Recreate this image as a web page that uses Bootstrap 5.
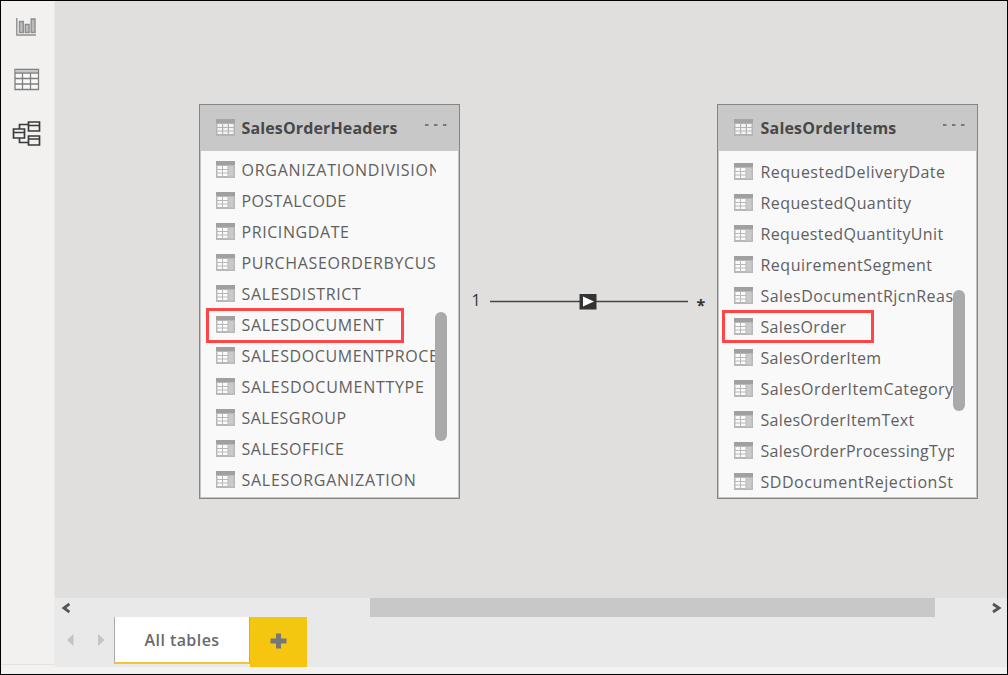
<!DOCTYPE html>
<html lang="en">
<head>
<meta charset="utf-8">
<title>Model view</title>
<meta name="viewport" content="width=device-width, initial-scale=1">
<link href="https://cdn.jsdelivr.net/npm/bootstrap@5.3.0/dist/css/bootstrap.min.css" rel="stylesheet">
<style>
  body { font-family: "Open Sans", "Noto Sans", sans-serif; color: #505050; background: #f3f2f1; }
  .app-frame { height: 675px; border: 1px solid #000; }
  .view-rail { width: 54px; background: #f2f1f0; border-right: 1px solid #eae9e8; height: 664px; border-bottom: 1px solid #e3e2e1; }
  .view-rail svg { display: block; }
  .rail-btn { height: 53px; padding: 0; border: 0; background: none; }
  .model-canvas { height: 597px; background: #e0dfdd; }
  .entity { position: absolute; top: 103px; width: 261px; height: 395px; background: #f9f9f9; border: 1px solid #858585; box-shadow: inset 0 0 0 1px #c4c4c4; }
  .entity-headers { left: 144px; }
  .entity-items { left: 662px; }
  .entity-head { height: 46px; background: #c8c8c8; padding-left: 15.500px; font-size: 16px; font-weight: 700; color: #484848; flex: none; }
  .entity-head svg, .field svg { flex: none; width: 19px; height: 17px; margin-right: 7px; }
  .entity-items .entity-head svg, .entity-items .field svg { margin-right: 8px; }
  .entity-head svg:first-child { margin-top: -1px; }
  .entity-head .label { margin-top: -1px; }
  .entity-head .more { margin: -7px 11px 0 auto !important; width: 24px; height: 4px; }
  .field-list { padding-left: 15.500px; width: 236px; overflow: hidden; flex: 1; }
  .entity-headers .field-list { padding-top: 3px; }
  .entity-items .field-list { padding-top: 5px; }
  .field { height: 31.1px; font-size: 16px; font-weight: 400; color: #606060; white-space: nowrap; line-height: 31px; }
  .field svg { margin-top: -1px; }
  .field .label { padding-top: 1px; }
  .scroll-grip { position: absolute; width: 12px; right: 12px; background: #aaa; border-radius: 6px; }
  .callout { position: absolute; border: 3px solid #ff4545; }
  .relation { position: absolute; left: 415px; top: 287px; width: 242px; height: 28px; }
  .bottom-bar { background: #e9e9e9; height: 69px; }
  .h-scroll { height: 19px; padding: 0 5px; }
  .h-thumb { height: 19px; width: 565px; margin-left: 300px; background: #c8c8c8; }
  .page-tab { width: 136px; height: 47px; background: #fff; border-left: 1px solid #aaa; border-right: 1px solid #aaa; border-bottom: 2px solid #f0c435; font-size: 16px; font-weight: 600; color: #6a6a6a; }
  .add-tab { width: 57px; height: 50px; background: linear-gradient(#f2c811, #f8c410); border: 0; padding: 0; }
  .add-tab svg { display: block; }
</style>
</head>
<body class="overflow-hidden">
<svg width="0" height="0" class="position-absolute">
  <symbol id="ico-table" viewBox="0 0 19 17">
    <rect width="19" height="17" fill="#b4b4b4"/><rect width="19" height="4" fill="#a4a4a4"/>
    <path d="M1.500 5h4.500v3H1.500zM7.200 5h4.500v3H7.200zM13 5h4.500v3H13zM1.500 9h4.500v2.500H1.500zM7.200 9h4.500v2.500H7.200zM13 9h4.500v2.500H13zM1.500 12.500h4.500v2.500H1.500zM7.200 12.500h4.500v2.500H7.200zM13 12.500h4.500v2.500H13z" fill="#f3f3f3"/>
  </symbol>
  <symbol id="ico-field" viewBox="0 0 19 17">
    <rect width="19" height="17" fill="#b8b8b8"/><rect width="19" height="4" fill="#a0a0a0"/>
    <rect x="12.500" y="5" width="5" height="10.500" fill="#cacaca"/>
    <path d="M1.500 5h4.500v3H1.500zM7 5h4.500v3H7zM1.500 9h4.500v2.500H1.500zM7 9h4.500v2.500H7zM1.500 12.500h4.500v2.500H1.500zM7 12.500h4.500v2.500H7z" fill="#fafafa"/>
  </symbol>
</svg>

<div class="app-frame d-flex overflow-hidden">
  <nav class="view-rail flex-shrink-0 d-flex flex-column">
    <button class="rail-btn" aria-label="Report"><svg width="53" height="53" viewBox="1 1 53 53" fill="#bcbcbc" stroke="#8f8f8f" stroke-width="1.400"><path d="M16.800 18v17H36" fill="none"/><path d="M19.500 21.500h3.800v11h-3.800zM25.300 24.500h3.800v8h-3.800zM31.200 19h3.800v13.500h-3.800z"/></svg></button>
    <button class="rail-btn" aria-label="Data"><svg width="53" height="53" viewBox="1 54 53 53" fill="none" stroke="#808080" stroke-width="1.300"><path d="M15 69.500h23.500v20H15z" fill="#f8f8f8"/><path d="M15 73h23.500M15 78.500h23.500M15 84h23.500M22.500 73v16.500M30.500 73v16.500"/><path d="M15.500 71.200h22.500" stroke="#bbb"/></svg></button>
    <button class="rail-btn" aria-label="Model"><svg width="53" height="53" viewBox="1 107 53 53" fill="none" stroke="#3a3a3a" stroke-width="1.700"><path d="M28.500 122h11v9h-11zM28.500 125.500h11M13.500 129h11v9h-11zM13.500 132.500h11M28.500 136h11v9h-11zM28.500 139h11M28 124.500h-8.500v4M19.500 138v4.500h8.500"/></svg></button>
  </nav>
  <main class="flex-grow-1">
    <section class="model-canvas position-relative overflow-hidden">
      <article class="entity entity-headers d-flex flex-column">
        <header class="entity-head d-flex align-items-center"><svg><use href="#ico-table"/></svg><span class="label" data-width="156">SalesOrderHeaders</span><svg class="more" viewBox="0 0 24 4"><path d="M1 1h3.500v2H1zM10 1h3.500v2H10zM19 1h3.500v2H19z" fill="#777"/></svg></header>
        <div class="field-list" id="header-fields"></div>
        <div class="scroll-grip" style="top:207px;height:129px"></div>
      </article>
      <article class="entity entity-items d-flex flex-column">
        <header class="entity-head d-flex align-items-center"><svg><use href="#ico-table"/></svg><span class="label" data-width="136">SalesOrderItems</span><svg class="more" viewBox="0 0 24 4"><path d="M1 1h3.500v2H1zM10 1h3.500v2H10zM19 1h3.500v2H19z" fill="#777"/></svg></header>
        <div class="field-list" id="item-fields"></div>
        <div class="scroll-grip" style="top:185px;height:121px"></div>
      </article>
      <div class="callout" style="left:151px;top:307px;width:198px;height:35px"></div>
      <div class="callout" style="left:667px;top:309px;width:152px;height:33px"></div>
      <svg class="relation" viewBox="470 288 242 28" font-family="Open Sans, sans-serif" fill="#333">
        <text x="471.500" y="306" font-size="16">1</text>
        <path d="M490 301.500h198" stroke="#444" stroke-width="1.500"/>
        <path d="M579.500 294h17v15.500h-17z"/><path d="M583 296.500l11 5-11 5z" fill="#fff"/>
        <text x="696.500" y="311" font-size="16" font-weight="700">*</text>
      </svg>
    </section>
    <footer class="bottom-bar">
      <div class="h-scroll d-flex align-items-center">
        <svg width="10" height="12" viewBox="0 0 10 12"><path d="M9.500 2L4 6 9.500 10" fill="none" stroke="#555" stroke-width="2.800"/></svg>
        <div class="h-thumb"></div>
        <svg class="ms-auto" width="12" height="12" viewBox="0 0 12 12"><path d="M3 2L9 6 3 10" fill="none" stroke="#555" stroke-width="2.800"/></svg>
      </div>
      <div class="d-flex">
        <svg width="59" height="47" viewBox="55 617 59 47" fill="#c4c4c4"><path d="M73.500 634v12l-6.500-6zM98 634v12l6.500-6z"/></svg>
        <div class="page-tab d-flex align-items-center justify-content-center"><span class="label" data-width="75">All tables</span></div>
        <button class="add-tab"><svg width="57" height="50" viewBox="250 617 57 50"><path d="M276 633.500h5v5h5.500v5H281v5h-5v-5h-5.500v-5h5.500z" fill="#777"/></svg></button>
      </div>
    </footer>
  </main>
</div>
<script src="https://cdn.jsdelivr.net/npm/bootstrap@5.3.0/dist/js/bootstrap.bundle.min.js"></script>
<script>
  // Field name and the width its label takes in the card.
  const headerFields = [["ORGANIZATIONDIVISION", 200], ["POSTALCODE", 105], ["PRICINGDATE", 108], ["PURCHASEORDERBYCUS", 195], ["SALESDISTRICT", 120], ["SALESDOCUMENT", 143], ["SALESDOCUMENTPROCE", 197], ["SALESDOCUMENTTYPE", 183], ["SALESGROUP", 105], ["SALESOFFICE", 103], ["SALESORGANIZATION", 175]];
  const itemFields = [["RequestedDeliveryDate", 185], ["RequestedQuantity", 151], ["RequestedQuantityUnit", 183], ["RequirementSegment", 172], ["SalesDocumentRjcnReas", 193], ["SalesOrder", 86], ["SalesOrderItem", 121], ["SalesOrderItemCategory", 193], ["SalesOrderItemText", 154], ["SalesOrderProcessingTyp", 196], ["SDDocumentRejectionSt", 193]];
  const fill = (id, rows) => {
    document.getElementById(id).innerHTML = rows.map(([name, w]) =>
      `<div class="field d-flex align-items-center"><svg><use href="#ico-field"/></svg><span class="label" data-width="${w}">${name}</span></div>`).join("");
  };
  fill("header-fields", headerFields);
  fill("item-fields", itemFields);
  document.querySelectorAll(".label").forEach(el => {
    const spare = Number(el.dataset.width) - el.getBoundingClientRect().width;
    el.style.letterSpacing = (spare / el.textContent.length).toFixed(3) + "px";
  });
</script>
</body>
</html>
